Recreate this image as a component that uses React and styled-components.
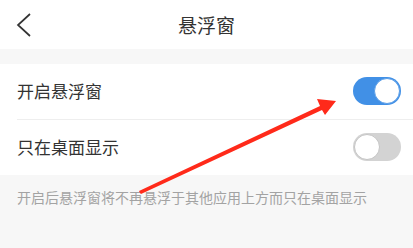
import React, { useState } from 'react';
import styled, { createGlobalStyle } from 'styled-components';

const GlobalStyle = createGlobalStyle`
  html, body {
    margin: 0;
    padding: 0;
    background: #f7f7f7;
    font-family: "Noto Sans CJK SC", "Noto Sans", sans-serif;
  }
`;

const Page = styled.div`
  position: relative;
  width: 413px;
  height: 248px;
  overflow: hidden;
  background: #f7f7f7;
`;

const Header = styled.div`
  height: 49px;
  background: #fff;
  display: flex;
  align-items: center;
  justify-content: center;
  position: relative;
`;

const BackButton = styled.button`
  position: absolute;
  left: 12px;
  top: 10px;
  width: 26px;
  height: 30px;
  border: none;
  background: none;
  padding: 0;
  display: flex;
  align-items: center;
  justify-content: center;
`;

const Title = styled.h1`
  margin: 0;
  font-size: 19px;
  font-weight: 400;
  color: #333;
  line-height: 1;
`;

const Section = styled.div`
  margin-top: 15px;
  background: #fff;
  padding-left: 17px;
`;

const Row = styled.div`
  height: 55px;
  display: flex;
  align-items: center;
  justify-content: space-between;
  padding-right: 12px;
  border-bottom: ${p => (p.last ? 'none' : '1px solid #eeeeee')};
`;

const Label = styled.span`
  font-size: 17px;
  color: #333;
  margin-top: -2px;
`;

const Track = styled.button`
  position: relative;
  width: 48px;
  height: 28px;
  border-radius: 14px;
  border: none;
  padding: 0;
  margin-top: -2px;
  background: ${p => (p.on ? '#4190e6' : '#d3d3d3')};
  cursor: pointer;
`;

const Knob = styled.span`
  position: absolute;
  top: 1px;
  left: ${p => (p.on ? '21px' : '1px')};
  width: 26px;
  height: 26px;
  border-radius: 50%;
  background: #fff;
  box-sizing: border-box;
  border: 1px solid ${p => (p.on ? '#5a9ee8' : '#c4c4c4')};
`;

const Hint = styled.p`
  margin: 0;
  padding: 13px 17px;
  font-size: 14px;
  color: #a3a3a3;
  line-height: 18px;
`;

const Overlay = styled.svg`
  position: absolute;
  left: 0;
  top: 0;
  pointer-events: none;
`;

function Switch({ on, onToggle }) {
  return (
    <Track on={on ? 1 : 0} onClick={onToggle}>
      <Knob on={on ? 1 : 0} />
    </Track>
  );
}

export default function App() {
  const [floating, setFloating] = useState(true);
  const [desktopOnly, setDesktopOnly] = useState(false);

  return (
    <Page>
      <GlobalStyle />
      <Header>
        <BackButton>
          <svg width="26" height="30" viewBox="0 0 26 30">
            <path d="M18 4 L6 15 L18 26" fill="none" stroke="#333" strokeWidth="1.7" />
          </svg>
        </BackButton>
        <Title>悬浮窗</Title>
      </Header>
      <Section>
        <Row>
          <Label>开启悬浮窗</Label>
          <Switch on={floating} onToggle={() => setFloating(!floating)} />
        </Row>
        <Row last>
          <Label>只在桌面显示</Label>
          <Switch on={desktopOnly} onToggle={() => setDesktopOnly(!desktopOnly)} />
        </Row>
      </Section>
      <Hint>开启后悬浮窗将不再悬浮于其他应用上方而只在桌面显示</Hint>
      <Overlay width="413" height="248" viewBox="0 0 413 248">
        <path
          d="M140 193 L139 191 L320 106 L317 99 L336 101 L325 115 L322 110 L141 194 Z"
          fill="#ff2a1a"
        />
      </Overlay>
    </Page>
  );
}
